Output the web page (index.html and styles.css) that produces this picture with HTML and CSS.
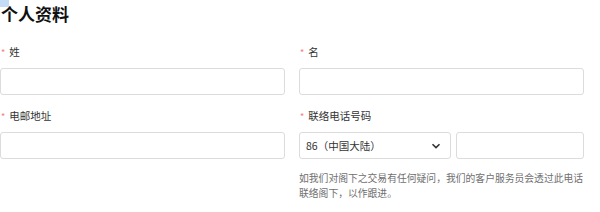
FILE: index.html
```html
<!DOCTYPE html>
<html lang="zh-CN">
<head>
    <meta charset="UTF-8">
    <meta name="viewport" content="width=device-width, initial-scale=1.0">
    <title>个人资料</title>
    <link rel="stylesheet" href="styles.css">
</head>
<body>
    <div class="page">
        <h2 class="title"><span class="sel"></span>个人资料</h2>

        <div class="form-grid">
            <div class="field">
                <label class="label"><span class="req">*</span>姓</label>
                <input class="input" type="text">
            </div>
            <div class="field">
                <label class="label"><span class="req">*</span>名</label>
                <input class="input" type="text">
            </div>

            <div class="field">
                <label class="label"><span class="req">*</span>电邮地址</label>
                <input class="input" type="text">
            </div>
            <div class="field">
                <label class="label"><span class="req">*</span>联络电话号码</label>
                <div class="phone-row">
                    <div class="select">
                        <span>86（中国大陆）</span>
                        <svg class="chevron" width="10" height="6" viewBox="0 0 10 6">
                            <path d="M1.5 1.2 L5 4.6 L8.5 1.2" fill="none" stroke="#333" stroke-width="1.6"/>
                        </svg>
                    </div>
                    <input class="input phone" type="text">
                </div>
                <p class="hint">如我们对阁下之交易有任何疑问，我们的客户服务员会透过此电话联络阁下，以作跟进。</p>
            </div>
        </div>
    </div>
</body>
</html>
```

FILE: styles.css
```css
* {
    margin: 0;
    padding: 0;
    box-sizing: border-box;
}
body {
    font-family: "Noto Sans CJK SC", "Noto Sans", sans-serif;
    background: #fff;
    color: #333;
}
.page {
    width: 584px;
    padding-top: 2px;
}
.title {
    position: relative;
    font-size: 17px;
    font-weight: bold;
    line-height: 24px;
    color: #111;
    padding-left: 1px;
}
/* leftover text selection in the corner */
.sel {
    position: absolute;
    left: 0;
    top: -2px;
    width: 9px;
    height: 7px;
    background: #c4dcf8;
    z-index: 1;
}
.form-grid {
    display: grid;
    grid-template-columns: 285px 285px;
    column-gap: 14px;
    row-gap: 13px;
    margin-top: 18px;
}
.field {
    display: flex;
    flex-direction: column;
}
.label {
    font-size: 10.5px;
    line-height: 16px;
    color: #333;
    margin-bottom: 7px;
}
.req {
    color: #f47b7b;
    font-size: 9px;
    margin-right: 4px;
    margin-left: 1px;
}
.input {
    height: 27px;
    width: 100%;
    border: 1px solid #dcdcdc;
    border-radius: 3px;
    background: #fff;
    outline: none;
}
.phone-row {
    display: flex;
    gap: 5px;
}
.select {
    width: 152px;
    height: 27px;
    flex-shrink: 0;
    border: 1px solid #dcdcdc;
    border-radius: 3px;
    display: flex;
    align-items: center;
    justify-content: space-between;
    padding: 0 9px 0 6px;
    font-size: 10.5px;
    color: #333;
}
.chevron {
    margin-top: 1px;
}
.phone {
    flex: 1;
}
.hint {
    margin-top: 12px;
    font-size: 9.8px;
    line-height: 15px;
    color: #6f6f6f;
}
```
